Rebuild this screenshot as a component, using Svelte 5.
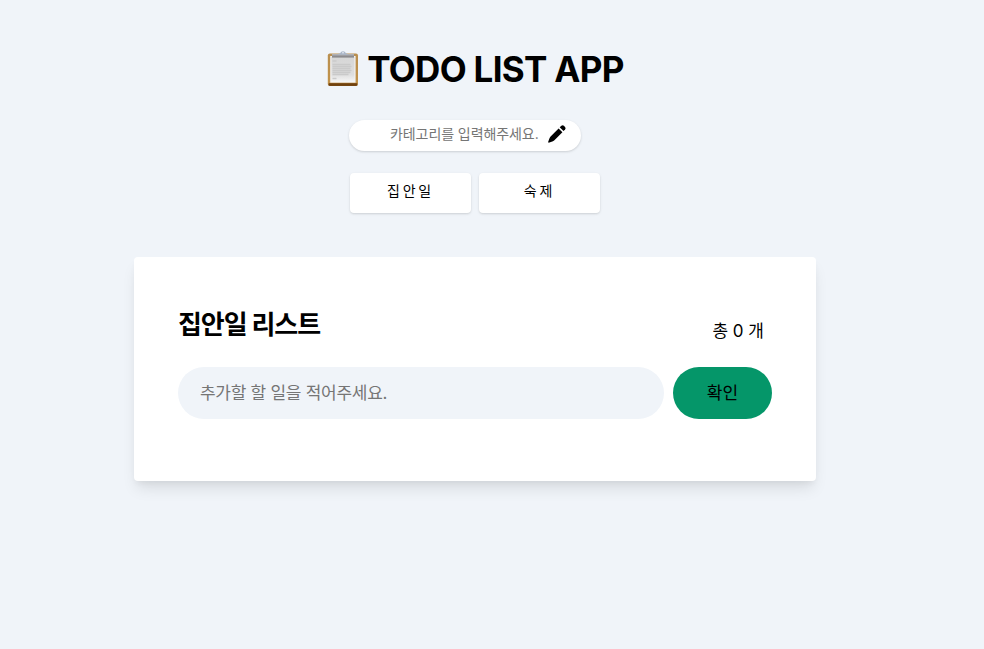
<script>
  let categories = $state(['집안일', '숙제']);
  let selected = $state('집안일');
  let todos = $state([]);
</script>

<main>
  <h1>
    <svg class="clipboard" width="32" height="36" viewBox="0 0 32 36">
      <defs>
        <linearGradient id="paper" x1="0" y1="0" x2="0" y2="1">
          <stop offset="0" stop-color="#d6d6d6" />
          <stop offset=".7" stop-color="#dedede" />
          <stop offset="1" stop-color="#f6f6f6" />
        </linearGradient>
        <linearGradient id="wood" x1="0" y1="0" x2="0" y2="1">
          <stop offset="0" stop-color="#b98f50" />
          <stop offset=".9" stop-color="#c1924b" />
          <stop offset="1" stop-color="#7b4d18" />
        </linearGradient>
      </defs>
      <rect x=".8" y="2.5" width="30.2" height="32.5" rx="2" fill="url(#wood)" />
      <path d="M2 32.2h28v1.6q0 1-1 1H3q-1 0-1-1z" fill="#70410f" />
      <rect x="3.2" y="5" width="25.4" height="26.7" fill="#f1f1f1" />
      <rect x="4.4" y="6" width="23" height="25" fill="url(#paper)" />
      <path
        d="M5.5 10h4M5.5 13.5h18M5.5 15.5h19M5.5 17.5h18M5.5 19.5h19M5.5 21.5h18M5.5 23.5h16M5.5 27.5h4"
        stroke="#cacaca"
        stroke-width="1.6"
      />
      <path d="M5 3.2h22v3.4H5z" fill="#8c8b8e" />
      <path d="M5 3.2h22v1.2H5z" fill="#b9bbc0" />
      <path d="M11 3.8q0-1.6 2-1.6Q14 .3 16 .3t3 1.9q2 0 2 1.6z" fill="#aab6c8" />
      <circle cx="16" cy="1.8" r=".8" fill="#eff3f8" />
    </svg>
    <span>TODO LIST APP</span>
  </h1>

  <form class="category">
    <input placeholder="카테고리를 입력해주세요." aria-label="카테고리" />
    <button type="button" aria-label="카테고리 추가">
      <svg width="18" height="18" viewBox="0 0 18 18">
        <path d="M10.6 3.4 14.4 7.2 6.4 15.2Q5.4 16.2 4.3 16.6L1.4 17.6Q-.2 18 .3 16.4L1.4 13.5Q1.8 12.3 2.6 11.4Z" />
        <path d="M11.7 2.3 13.4.7Q14.7-.3 15.9.8L17 1.9Q18.1 3.1 17.1 4.4L15.5 6.1Z" />
      </svg>
    </button>
  </form>

  <nav>
    {#each categories as name}
      <button type="button" onclick={() => (selected = name)}>{name}</button>
    {/each}
  </nav>

  <section>
    <header>
      <h2>{selected} 리스트</h2>
      <p>총 {todos.length} 개</p>
    </header>
    <form class="todo">
      <input placeholder="추가할 할 일을 적어주세요." aria-label="할 일" />
      <button type="button">확인</button>
    </form>
  </section>
</main>

<style>
  :global(body) {
    background: #f0f4f9;
  }
  main {
    box-sizing: border-box;
    width: 950px;
    height: 649px;
    padding-top: 48px;
    display: flex;
    flex-direction: column;
    align-items: center;
    font-family: Inter, 'Noto Sans CJK KR', sans-serif;
    color: #000;
  }
  input,
  button {
    box-sizing: border-box;
    margin: 0;
    padding: 0;
    border: 0;
    outline: 0;
    font: inherit;
    color: inherit;
    background: none;
  }
  input::placeholder {
    color: #757575;
    opacity: 1;
  }
  h1 {
    margin: 0;
    height: 44px;
    display: flex;
    align-items: center;
    gap: 8px;
    padding-left: 1px;
    font-size: 35px;
    font-weight: 700;
    line-height: 44px;
    white-space: nowrap;
    letter-spacing: -0.68px;
  }
  h1 span {
    margin-bottom: 3px;
  }
  .clipboard {
    margin-bottom: 2px;
  }
  .category {
    box-sizing: border-box;
    width: 232px;
    height: 31px;
    margin: 28px 20px 0 0;
    padding: 0 15px 0 41px;
    display: flex;
    align-items: center;
    background: #fff;
    border-radius: 16px;
    box-shadow: 0 1px 3px rgba(0, 0, 0, 0.1), 0 1px 2px rgba(0, 0, 0, 0.06);
  }
  .category input {
    width: 158px;
    height: 31px;
    padding-bottom: 4px;
    font-size: 14px;
    letter-spacing: -0.08px;
  }
  .category button {
    width: 18px;
    height: 18px;
    margin-bottom: 3px;
  }
  .category svg {
    display: block;
  }
  nav {
    margin-top: 22px;
    display: flex;
    gap: 8px;
  }
  nav button {
    width: 121px;
    height: 40px;
    padding: 0 0 6px 0;
    background: #fff;
    border-radius: 4px;
    box-shadow: 0 1px 3px rgba(0, 0, 0, 0.1), 0 1px 2px rgba(0, 0, 0, 0.06);
    font-size: 14px;
    letter-spacing: 2.8px;
  }
  section {
    box-sizing: border-box;
    width: 682px;
    height: 224px;
    margin-top: 44px;
    padding: 44px;
    background: #fff;
    border-radius: 4px;
    box-shadow: 0 10px 15px -3px rgba(0, 0, 0, 0.1), 0 4px 6px -2px rgba(0, 0, 0, 0.05);
  }
  header {
    height: 66px;
    display: flex;
    justify-content: space-between;
  }
  h2 {
    margin: 0;
    font-size: 26px;
    line-height: 48px;
    font-weight: 700;
    letter-spacing: -1.1px;
  }
  p {
    margin: 18px 8px 0 0;
    font-size: 17px;
    line-height: 24px;
  }
  .todo {
    display: flex;
    gap: 9px;
  }
  .todo input {
    width: 486px;
    height: 52px;
    padding: 0 22px;
    border-radius: 26px;
    background: #f0f4f9;
    font-size: 17px;
    letter-spacing: -0.27px;
  }
  .todo button {
    width: 99px;
    height: 52px;
    padding-bottom: 4px;
    border-radius: 26px;
    background: #059669;
    font-size: 17px;
  }
</style>
